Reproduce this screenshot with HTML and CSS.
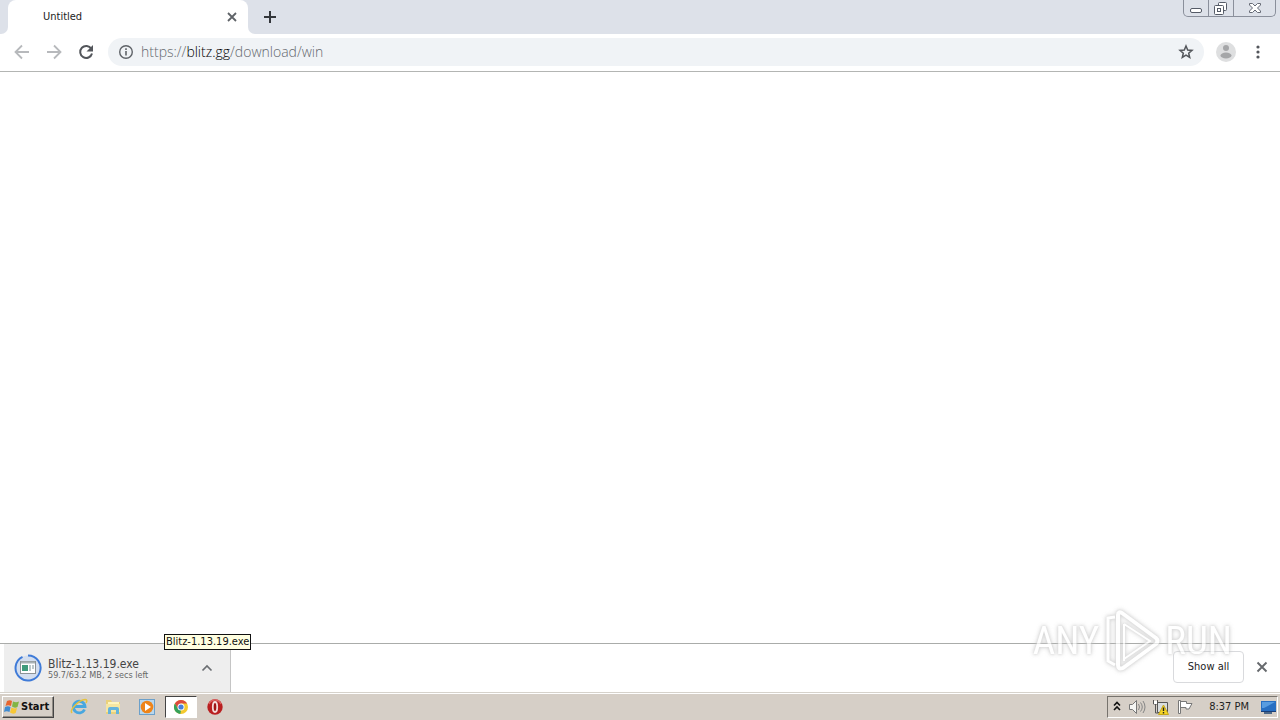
FILE: index.html
```html
<!DOCTYPE html>
<html lang="en">
<head>
<meta charset="utf-8">
<meta name="viewport" content="width=device-width, initial-scale=1">
<title>Untitled</title>
<link rel="stylesheet" href="styles.css">
</head>
<body>
<div class="desktop">
  <header class="tabstrip">
    <div class="strip-edge"></div>
    <div class="tab">
      <span class="tab-title">Untitled</span>
      <button class="icon-button" aria-label="Close tab"><svg width="16" height="16" viewBox="0 0 16 16"><path d="M4 4l8 8M12 4l-8 8" stroke="#5f6368" stroke-width="1.8"/></svg></button>
    </div>
    <div class="strip-rest">
      <button class="icon-button" aria-label="New tab"><svg width="16" height="16" viewBox="0 0 16 16"><path d="M8 2v12M2 8h12" stroke="#33363b" stroke-width="2"/></svg></button>
      <div class="window-controls">
        <button class="window-button" aria-label="Minimize"><svg width="24" height="16" viewBox="0 0 24 16"><rect x="6.500" y="8.500" width="11" height="4" rx="1.500" fill="#fff" stroke="#555b67"/></svg></button>
        <button class="window-button" aria-label="Restore"><svg width="24" height="16" viewBox="0 0 24 16"><rect x="9.500" y="2.500" width="8" height="8" rx="1" fill="#fff" stroke="#555b67"/><rect x="5.500" y="5.500" width="9" height="9" rx="1" fill="#fff" stroke="#555b67"/><rect x="8.500" y="8.500" width="3" height="3" fill="#fff" stroke="#555b67"/></svg></button>
        <button class="window-button window-close" aria-label="Close"><svg width="24" height="16" viewBox="0 0 24 16"><path d="M6.500 3.500h3l2.500 2.500 2.500-2.500h3v1.500l-3 3 3 3v1.500h-3L12 10l-2.500 2.500h-3V11l3-3-3-3z" fill="#fff" stroke="#666b76"/></svg></button>
      </div>
    </div>
  </header>

  <nav class="toolbar">
    <button class="nav-button" aria-label="Back"><svg width="16" height="16" viewBox="0 0 16 16"><path d="M15 8H2M8 1.500L1.500 8 8 14.500" fill="none" stroke="#b7b9bc" stroke-width="1.800"/></svg></button>
    <button class="nav-button" aria-label="Forward"><svg width="16" height="16" viewBox="0 0 16 16"><path d="M1 8h13M8 1.500L14.500 8 8 14.500" fill="none" stroke="#b7b9bc" stroke-width="1.800"/></svg></button>
    <button class="nav-button" aria-label="Reload"><svg width="16" height="16" viewBox="0 0 16 16"><path d="M13.300 4.800A6 6 0 1 0 14 9.500" fill="none" stroke="#53565b" stroke-width="2"/><path d="M15 1v6.500H8.500z" fill="#53565b"/></svg></button>
    <div class="address-bar">
      <svg width="16" height="16" viewBox="0 0 16 16"><circle cx="8" cy="8" r="6.300" fill="none" stroke="#5f6368" stroke-width="1.400"/><path d="M8 7v4.500M8 4.300V6" stroke="#5f6368" stroke-width="1.600"/></svg>
      <a class="url" href="#">https://<span class="host">blitz.gg</span>/download/win</a>
      <button class="icon-button" aria-label="Bookmark"><svg width="16" height="16" viewBox="0 0 16 16"><path d="M8 2l1.700 4 4.300.4-3.300 2.800 1 4.300L8 11.200l-3.700 2.300 1-4.300L2 6.400 6.300 6z" fill="none" stroke="#53565b" stroke-width="1.500"/></svg></button>
    </div>
    <button class="icon-button profile" aria-label="Profile"><svg width="20" height="20" viewBox="0 0 20 20"><circle cx="10" cy="10" r="10" fill="#dedfe0"/><circle cx="10" cy="6" r="3" fill="#a5a6a8"/><ellipse cx="10" cy="13.500" rx="5.500" ry="3" fill="#a5a6a8"/></svg></button>
    <button class="icon-button menu" aria-label="Menu"><svg width="16" height="16" viewBox="0 0 16 16" fill="#53565b"><circle cx="8" cy="3" r="1.600"/><circle cx="8" cy="8" r="1.600"/><circle cx="8" cy="13" r="1.600"/></svg></button>
  </nav>

  <main class="page"></main>

  <section class="shelf">
    <div class="download">
      <svg width="28" height="28" viewBox="0 0 28 28"><circle cx="14" cy="14" r="12.500" fill="#d3deef"/><path d="M14 1.500A12.500 12.500 0 1 1 8.500 2.800" fill="none" stroke="#3f7bd8" stroke-width="2"/><rect x="6.500" y="7.500" width="15" height="12" fill="#fff" stroke="#8d9396"/><path d="M7 8.500h14" stroke="#a9b2b5" stroke-width="2"/><rect x="8" y="11" width="6" height="6" fill="#3f9b7b"/><path d="M16 11v6M19 11v4" stroke="#7b9295"/></svg>
      <div class="download-text">
        <span class="download-name">Blitz-1.13.19.exe</span>
        <span class="download-status">59.7/63.2 MB, 2 secs left</span>
      </div>
      <button class="icon-button" aria-label="Download options"><svg width="16" height="16" viewBox="0 0 16 16"><path d="M3.500 10.500L8 6l4.500 4.500" fill="none" stroke="#6b6e72" stroke-width="1.700"/></svg></button>
      <div class="tooltip" role="tooltip">Blitz-1.13.19.exe</div>
    </div>
    <div class="shelf-actions">
      <button class="show-all">Show all</button>
      <button class="icon-button" aria-label="Close downloads"><svg width="16" height="16" viewBox="0 0 16 16"><path d="M3.500 3.500l9 9M12.500 3.500l-9 9" stroke="#66696d" stroke-width="1.900"/></svg></button>
    </div>
  </section>

  <footer class="taskbar">
    <button class="start"><svg width="16" height="16" viewBox="0 0 16 16"><path d="M3 2q3-1.500 5 0L7 7q-3-1.500-5.500 0z" fill="#e7642d"/><path d="M9 2.500q3 1.500 6 0L13.500 8q-3 1.500-5.500-.5z" fill="#82b544"/><path d="M1 8q3-1.500 5.500 0L5.500 13q-3-1.500-5.500 0z" fill="#408bd0"/><path d="M7.500 8.500q3 1.500 5.500.5l-1.300 5q-3 1.500-5.700-.5z" fill="#f7c736"/></svg>Start</button>
    <div class="quick">
      <button class="task" aria-label="Internet Explorer"><svg width="18" height="18" viewBox="0 0 18 18"><path d="M14.500 11.500A5.800 5.800 0 1 1 15 8.500H4" fill="none" stroke="#48a7df" stroke-width="2.800"/><path d="M2 15C-1 12 9 2 15 1.500q3 0 1 3.500" fill="none" stroke="#e5c23e" stroke-width="1.500"/></svg></button>
      <button class="task" aria-label="File Explorer"><svg width="18" height="18" viewBox="0 0 18 18"><path d="M2 4V2h5l1 2h8v12H2z" fill="#ead17b"/><path d="M4 4h11v5H4z" fill="#fff5bd"/><path d="M2 6h14v8H2z" fill="#f6e6a1"/><path d="M4 16v-5q0-2 2-2h7q2 0 2 2v5h-3v-4H7v4z" fill="#64b3dc"/></svg></button>
      <button class="task" aria-label="Media Player"><svg width="18" height="18" viewBox="0 0 18 18"><rect x="1.500" y="1.500" width="15" height="15" fill="#b9d7ed" stroke="#6ca0ca"/><circle cx="9" cy="9" r="6.300" fill="#ee8419"/><path d="M7 5l6 4-6 4z" fill="#fff"/></svg></button>
      <button class="task active" aria-label="Chrome"><svg width="16" height="16" viewBox="0 0 16 16"><circle cx="8" cy="8" r="7" fill="#f4c92f"/><path d="M1.900 4.500A7 7 0 0 1 14.100 4.500H8L5 9.800z" fill="#dc4a3d"/><path d="M1.900 4.500L5 9.800 8 11.500 7.300 15A7 7 0 0 1 1.900 4.500" fill="#35a15a"/><circle cx="8" cy="8" r="3.500" fill="#fff"/><circle cx="8" cy="8" r="2.600" fill="#467fdb"/></svg></button>
      <button class="task" aria-label="Opera"><svg width="18" height="18" viewBox="0 0 18 18"><circle cx="9" cy="9" r="7.700" fill="#b91f20"/><path d="M3 6a6.500 6.500 0 0 1 12 0" fill="none" stroke="#dc6260" stroke-width="1.500"/><ellipse cx="9" cy="9" rx="2.200" ry="5" fill="#a01515" stroke="#f3dcda" stroke-width="1.800"/></svg></button>
    </div>
    <div class="tray">
      <svg width="10" height="16" viewBox="0 0 10 16"><path d="M2 6.500l3-3 3 3M2 11l3-3 3 3" fill="none" stroke="#111" stroke-width="1.600"/></svg>
      <svg width="18" height="16" viewBox="0 0 18 16"><path d="M1.500 5.500h3l4-4v13l-4-4h-3z" fill="#f5f5f3" stroke="#777"/><path d="M10.500 5q2 3 0 6M12.500 3.500q3.500 4.500 0 9M15 2q4 6 0 12" fill="none" stroke="#858585"/></svg>
      <svg width="18" height="16" viewBox="0 0 18 16"><path d="M5.500 3.500h10v10h-10z" fill="#d9dddf" stroke="#555"/><path d="M1.500 1v4h4V1M3.500 5v9h3" fill="none" stroke="#555"/><path d="M2 2h3v3H2z" fill="#fff"/><path d="M11.500 6l5 9.500H6.500z" fill="#f6d526" stroke="#c6a719"/><path d="M11.500 8.500v3.500M11.500 13v1.500" stroke="#222" stroke-width="1.400"/></svg>
      <svg width="18" height="16" viewBox="0 0 18 16"><path d="M4.500 2.500h6v2h5.500l-3 5.500h-3V8.500H4.500z" fill="#fff" stroke="#777"/><path d="M2.500 1.500h2v13h-2z" fill="#fff" stroke="#777"/></svg>
      <time class="clock">8:37 PM</time>
      <svg width="16" height="16" viewBox="0 0 16 16"><path d="M1 2h15v10H1z" fill="#286fc2"/><path d="M2 3h13L4 9H2z" fill="#589ce0"/><path d="M1 12h15v1H1z" fill="#193e78"/><path d="M4 14h8" stroke="#4d6888" stroke-width="2"/></svg>
    </div>
  </footer>

  <div class="watermark">
    <span>ANY</span>
    <svg width="58" height="62" viewBox="0 0 58 62"><path d="M12 7L5 8v43l7 4" fill="none" stroke="#fff" stroke-width="3"/><path d="M15 5q0-4 4-2l34 25q3 3 0 6L20 58q-5 2-5-3z" fill="none" stroke="#fff" stroke-width="4" stroke-linejoin="round"/><path d="M21 14v37M21 14l26 17-26 18" fill="none" stroke="#fff" stroke-width="2"/></svg>
    <span>RUN</span>
  </div>
</div>
</body>
</html>
```
FILE: styles.css
```css
* { box-sizing: border-box; }
body {
  margin: 0;
  color: #222;
  font-family: Tahoma, "DejaVu Sans Condensed", "DejaVu Sans", sans-serif;
  font-size: 11px;
  line-height: 14px;
  background: #fff;
}
button {
  border: 0;
  padding: 0;
  background: transparent;
  color: inherit;
  font: inherit;
}
svg { display: block; flex: none; }
.desktop {
  display: flex;
  flex-direction: column;
  min-height: 100vh;
  position: relative;
}
.tabstrip { display: flex; height: 34px; background: #fff; }
.strip-edge { width: 8px; background: #dde1e9; border-bottom-right-radius: 7px; }
.tab {
  display: flex;
  align-items: center;
  justify-content: space-between;
  width: 240px;
  padding: 0 8px 0 35px;
  background: linear-gradient(#dde1e9, #dde1e9) top / 100% 8px no-repeat;
  position: relative;
  isolation: isolate;
}
.tab::before {
  content: "";
  position: absolute;
  inset: 0;
  z-index: -1;
  background: #fff;
  border-radius: 8px 8px 0 0;
}
.strip-rest {
  display: flex;
  flex: 1;
  align-items: center;
  justify-content: space-between;
  padding: 0 4px 0 14px;
  background: #dde1e9;
  border-bottom-left-radius: 7px;
}
.window-controls {
  display: flex;
  align-self: flex-start;
  height: 17px;
  border: 1px solid #8a8f9b;
  border-top: 0;
  border-radius: 0 0 5px 5px;
}
.window-button { display: flex; justify-content: center; width: 25px; border-right: 1px solid #8a8f9b; }
.window-close { width: 41px; border-right: 0; }
.toolbar {
  display: flex;
  align-items: center;
  height: 38px;
  padding: 0 14px 1px;
  border-bottom: 1px solid #b3b5b3;
}
.nav-button { margin-right: 16px; }
.address-bar {
  display: flex;
  flex: 1;
  align-items: center;
  gap: 7px;
  height: 28px;
  margin-left: -2px;
  padding: 0 10px;
  border-radius: 14px;
  background: #f0f3f6;
}
.url {
  flex: 1;
  color: #65696e;
  font-family: "Open Sans", "Noto Sans", sans-serif;
  font-size: 14px;
  font-weight: 300;
  line-height: 20px;
  text-decoration: none;
}
.host { color: #000; }
.profile { margin: 0 14px 0 12px; }
.page { flex: 1; }
.shelf {
  display: flex;
  justify-content: space-between;
  height: 49px;
  padding-left: 4px;
  border-top: 1px solid #aaacaa;
}
.download {
  display: flex;
  align-items: center;
  width: 227px;
  padding: 0 15px 0 10px;
  background: #eee;
  border-right: 1px solid #c5c5c5;
  position: relative;
}
.download-text { display: flex; flex: 1; flex-direction: column; padding: 2px 0 0 6px; white-space: nowrap; }
.download-name { color: #444; font-size: 12px; line-height: 12px; }
.download-status { color: #666; font-size: 9px; line-height: 10px; }
.tooltip {
  position: absolute;
  left: 160px;
  bottom: 42px;
  height: 16px;
  padding: 0 1px;
  border: 1px solid #111;
  background: #ffffe1;
  color: #111;
  font-size: 11px;
  white-space: nowrap;
}
.shelf-actions { display: flex; align-items: center; gap: 10px; padding: 0 10px 2px 0; }
.show-all {
  width: 71px;
  height: 32px;
  border: 1px solid #d9dadd;
  border-radius: 4px;
  background: #fff;
}
.taskbar {
  display: flex;
  align-items: center;
  height: 28px;
  padding: 1px 2px 0;
  border-top: 1px solid #d6d2cb;
  box-shadow: inset 0 1px #fff;
  background: #d6cfc7;
}
.start {
  display: flex;
  align-items: center;
  gap: 1px;
  width: 52px;
  height: 22px;
  padding: 0 1px;
  border: 1px solid;
  border-color: #fff #444 #444 #fff;
  box-shadow: inset -1px -1px #918c85;
  color: #111;
  font-size: 11px;
  font-weight: 700;
}
.quick { display: flex; flex: 1; gap: 2px; padding-left: 9px; }
.task { display: flex; align-items: center; justify-content: center; width: 32px; height: 22px; }
.active { border: 1px solid; border-color: #444 #fff #fff #444; background: #fff; }
.tray {
  display: flex;
  align-items: center;
  gap: 6px;
  height: 22px;
  padding: 0 1px 0 4px;
  border: 1px solid;
  border-color: #77736d #fff #fff #77736d;
}
.clock { margin: 0 5px 0 9px; white-space: nowrap; }
.watermark {
  position: absolute;
  right: 48px;
  bottom: 48px;
  display: flex;
  align-items: center;
  gap: 4px;
  color: #fff;
  font-family: "Liberation Sans Narrow", "Roboto Condensed", Roboto, sans-serif;
  font-size: 39px;
  line-height: 44px;
  opacity: .7;
  filter: drop-shadow(0 0 1px #ccc) drop-shadow(0 0 2px #bbb);
  pointer-events: none;
}
```
